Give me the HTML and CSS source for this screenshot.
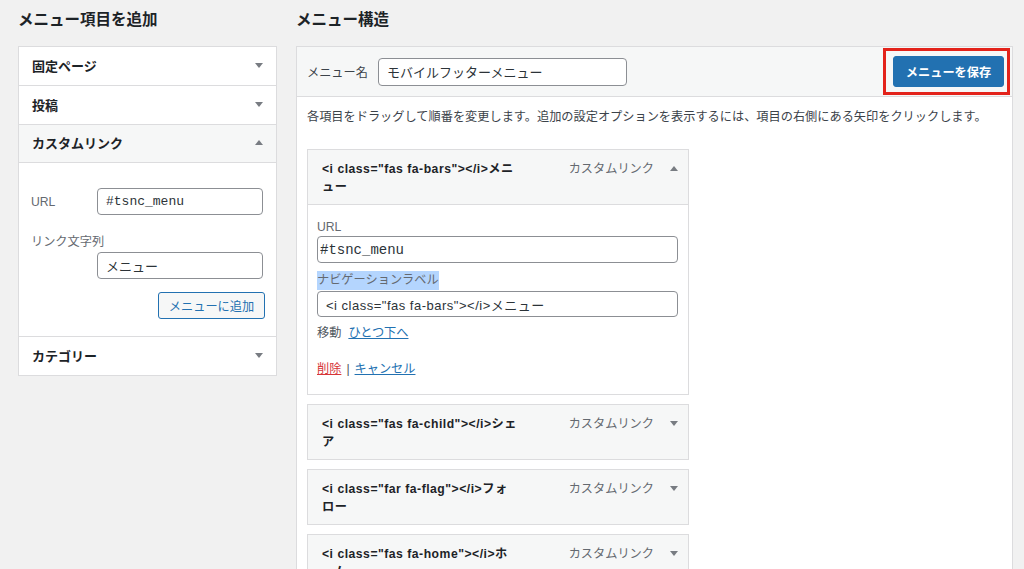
FILE: index.html
```html
<!DOCTYPE html>
<html lang="ja">
<head>
<meta charset="utf-8">
<title>メニュー</title>
<link rel="stylesheet" href="styles.css">
</head>
<body>
<div class="page">
  <aside class="side">
    <h2 class="heading">メニュー項目を追加</h2>
    <div class="accordion">
      <section class="acc">
        <div class="acc-head"><span>固定ページ</span><i class="tri down"></i></div>
      </section>
      <section class="acc">
        <div class="acc-head"><span>投稿</span><i class="tri down"></i></div>
      </section>
      <section class="acc open">
        <div class="acc-head"><span>カスタムリンク</span><i class="tri up"></i></div>
        <div class="acc-body">
          <div class="field-row">
            <label class="side-label">URL</label>
            <input class="input row-input mono13" value="#tsnc_menu">
          </div>
          <label class="side-label block">リンク文字列</label>
          <input class="input indent" value="メニュー">
          <div class="btn-row"><button class="btn-secondary">メニューに追加</button></div>
        </div>
      </section>
      <section class="acc">
        <div class="acc-head"><span>カテゴリー</span><i class="tri down"></i></div>
      </section>
    </div>
  </aside>
  <main class="main">
    <h2 class="heading">メニュー構造</h2>
    <div class="panel">
      <div class="panel-head">
        <label class="name-label">メニュー名</label>
        <input class="input name-input" value="モバイルフッターメニュー">
        <div class="save-wrap">
          <button class="btn-primary">メニューを保存</button>
          <span class="mark-box"></span>
        </div>
      </div>
      <div class="panel-body">
        <p class="desc">各項目をドラッグして順番を変更します。追加の設定オプションを表示するには、項目の右側にある矢印をクリックします。</p>
        <ul class="menu-list">
          <li class="item">
            <div class="item-head">
              <span class="item-title">&lt;i class="fas fa-bars"&gt;&lt;/i&gt;メニ<br>ュー</span>
              <span class="item-type">カスタムリンク</span>
              <i class="tri up item-tri"></i>
            </div>
            <div class="item-settings">
              <div class="set-label">URL</div>
              <input class="input set-input url-input" value="#tsnc_menu">
              <div class="set-label gap"><span class="selected">ナビゲーションラベル</span></div>
              <input class="input set-input nav-input" value='&lt;i class="fas fa-bars"&gt;&lt;/i&gt;メニュー'>
              <div class="move-line">移動<a class="link" href="#">ひとつ下へ</a></div>
              <div class="actions"><a class="delete" href="#">削除</a><span class="sep">|</span><a class="link" href="#">キャンセル</a></div>
            </div>
          </li>
          <li class="item">
            <div class="item-head">
              <span class="item-title">&lt;i class="fas fa-child"&gt;&lt;/i&gt;シェ<br>ア</span>
              <span class="item-type">カスタムリンク</span>
              <i class="tri down item-tri"></i>
            </div>
          </li>
          <li class="item">
            <div class="item-head">
              <span class="item-title">&lt;i class="far fa-flag"&gt;&lt;/i&gt;フォ<br>ロー</span>
              <span class="item-type">カスタムリンク</span>
              <i class="tri down item-tri"></i>
            </div>
          </li>
          <li class="item">
            <div class="item-head">
              <span class="item-title">&lt;i class="fas fa-home"&gt;&lt;/i&gt;ホ<br>ーム</span>
              <span class="item-type">カスタムリンク</span>
              <i class="tri down item-tri"></i>
            </div>
          </li>
        </ul>
      </div>
    </div>
  </main>
</div>
</body>
</html>
```

FILE: styles.css
```css
* { box-sizing: border-box; }
html, body { margin: 0; height: 100%; }
body {
  background: #f1f1f1;
  font-family: "Liberation Sans", "Noto Sans CJK JP", sans-serif;
  color: #3c434a;
  overflow: hidden;
}
.page {
  display: flex;
  gap: 19px;
  padding: 0 11px 0 18px;
  height: 569px;
  overflow: hidden;
}
.side { width: 259px; flex: none; }
.main { flex: 1; min-width: 0; }
.heading {
  margin: 0;
  padding-top: 10px;
  height: 46px;
  font-size: 15.5px;
  line-height: 20px;
  font-weight: 700;
  color: #1d2327;
}

/* accordion */
.accordion {
  background: #fff;
  border: 1px solid #dcdcde;
  border-bottom: none;
}
.acc { border-bottom: 1px solid #dcdcde; }
.acc-head {
  display: flex;
  align-items: center;
  justify-content: space-between;
  height: 38px;
  padding: 0 13px 2px 13px;
  font-size: 13px;
  font-weight: 700;
  color: #1d2327;
}
.acc.open .acc-head {
  background: #f6f7f7;
  border-bottom: 1px solid #dcdcde;
}
.tri {
  display: inline-block;
  width: 0;
  height: 0;
  border-left: 4px solid transparent;
  border-right: 4px solid transparent;
}
.tri.down { border-top: 5px solid #787c82; }
.tri.up { border-bottom: 5px solid #787c82; }

.acc-body {
  display: flex;
  flex-direction: column;
  padding: 25px 13px 17px 12px;
}
.field-row { display: flex; align-items: center; }
.side-label {
  font-size: 12.2px;
  line-height: 18px;
  color: #646970;
  width: 66px;
  flex: none;
}
.side-label.block { width: auto; margin-top: 18px; }
.input {
  display: block;
  height: 27px;
  border: 1px solid #8c8f94;
  border-radius: 4px;
  background: #fff;
  color: #2c3338;
  font-family: "Liberation Sans", "Noto Sans CJK JP", sans-serif;
  font-size: 13px;
  padding: 0 8px;
  outline: none;
}
.row-input { flex: 1 1 auto; min-width: 0; }
.mono13 { font-family: "Liberation Mono", "DejaVu Sans Mono", monospace; font-size: 13px; }
.indent { flex: none; height: 27px; margin-left: 66px; margin-top: 1px; }
.btn-row { display: flex; justify-content: flex-end; margin-top: 13px; margin-right: -2px; }
.btn-secondary {
  height: 27px;
  width: 107px;
  padding: 0;
  border: 1px solid #2271b1;
  border-radius: 3px;
  background: #f6f7f7;
  color: #2271b1;
  font-family: "Liberation Sans", "Noto Sans CJK JP", sans-serif;
  font-size: 12.2px;
}

/* main panel */
.panel {
  background: #fff;
  border: 1px solid #dcdcde;
  min-height: 600px;
}
.panel-head {
  display: flex;
  align-items: center;
  height: 50px;
  padding: 0 8px 0 10px;
  background: #f6f7f7;
  border-bottom: 1px solid #dcdcde;
}
.name-label {
  width: 71px;
  flex: none;
  font-size: 12.2px;
  color: #3c434a;
}
.name-input { width: 249px; height: 28px; }
.save-wrap { margin-left: auto; position: relative; }
.btn-primary {
  display: block;
  width: 111px;
  height: 31px;
  padding: 0;
  border: 1px solid #2271b1;
  border-radius: 3px;
  background: #2271b1;
  color: #fff;
  font-family: "Liberation Sans", "Noto Sans CJK JP", sans-serif;
  font-size: 12.2px;
  font-weight: 700;
}
.mark-box {
  position: absolute;
  top: -8px;
  bottom: -8px;
  left: -10px;
  right: -6px;
  border: 3px solid #e3231b;
  pointer-events: none;
}
.panel-body { padding: 11px 10px; }
.desc {
  margin: 0;
  font-size: 12.2px;
  line-height: 18px;
  color: #3c434a;
  white-space: nowrap;
}
.menu-list { list-style: none; margin: 23px 0 0; padding: 0; width: 382px; }
.item { margin-bottom: 9px; }
.item-head {
  display: flex;
  align-items: flex-start;
  padding: 10px 10px 8px 14px;
  border: 1px solid #dcdcde;
  background: #f6f7f7;
  font-size: 12.2px;
  line-height: 18px;
}
.item-title {
  flex: 1;
  font-weight: 700;
  color: #1d2327;
  white-space: nowrap;
  letter-spacing: 0.5px;
}
.item-type { color: #646970; }
.item-tri { margin: 6px 0 0 16px; }
.item-settings {
  border: 1px solid #dcdcde;
  border-top: none;
  padding: 13px 10px 16px 9px;
  background: #fff;
  font-size: 12.2px;
  line-height: 18px;
}
.set-label { color: #646970; }
.set-label.gap { margin-top: 8px; line-height: 19px; }
.selected { background: #b4d5fe; display: inline-block; }
.set-input { width: 100%; }
.url-input {
  font-family: "Liberation Mono", "DejaVu Sans Mono", monospace;
  font-size: 14px;
  padding-left: 2px;
}
.nav-input { margin-top: 1px; height: 26px; letter-spacing: 0.5px; }
.move-line { margin-top: 7px; color: #50575e; }
.link { color: #2271b1; text-decoration: underline; }
.move-line .link { margin-left: 7px; }
.actions { margin-top: 18px; color: #50575e; }
.delete { color: #d63638; text-decoration: underline; }
.sep { margin: 0 5px; color: #50575e; }
```
